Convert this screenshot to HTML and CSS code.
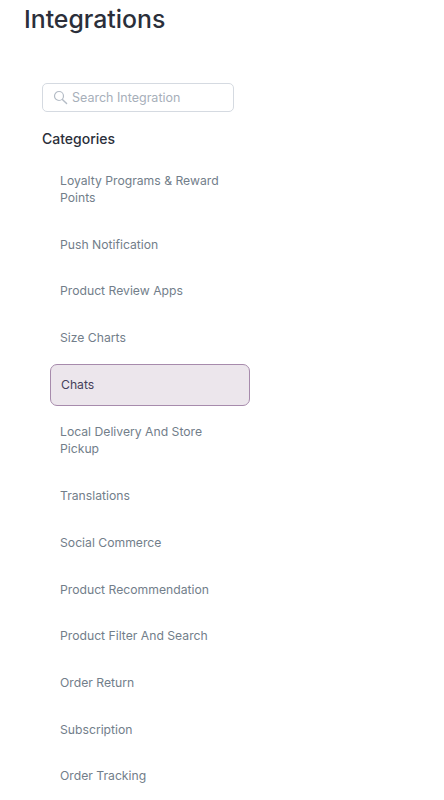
FILE: index.html
```html
<!DOCTYPE html>
<html lang="en">
<head>
<meta charset="UTF-8">
<meta name="viewport" content="width=device-width, initial-scale=1">
<title>Integrations</title>
<link rel="stylesheet" href="styles.css">
</head>
<body>
<h1 class="page-title">Integrations</h1>

<div class="sidebar">
    <label class="search-box">
        <svg class="search-icon" width="15" height="15" viewBox="0 0 15 15" fill="none">
            <circle cx="6" cy="6" r="4.5" stroke="#b4bcc6" stroke-width="1.2"/>
            <line x1="9.4" y1="9.4" x2="13.6" y2="13.6" stroke="#b4bcc6" stroke-width="1.4" stroke-linecap="round"/>
        </svg>
        <input class="search-input" placeholder="Search Integration">
    </label>

    <h2 class="categories-title">Categories</h2>

    <ul class="category-list">
        <li class="category">Loyalty Programs &amp; Reward Points</li>
        <li class="category">Push Notification</li>
        <li class="category">Product Review Apps</li>
        <li class="category">Size Charts</li>
        <li class="category active">Chats</li>
        <li class="category">Local Delivery And Store Pickup</li>
        <li class="category">Translations</li>
        <li class="category">Social Commerce</li>
        <li class="category">Product Recommendation</li>
        <li class="category">Product Filter And Search</li>
        <li class="category">Order Return</li>
        <li class="category">Subscription</li>
        <li class="category">Order Tracking</li>
    </ul>
</div>
</body>
</html>
```

FILE: styles.css
```css
* {
    box-sizing: border-box;
}

html, body {
    height: 100%;
}

body {
    margin: 0;
    overflow: hidden;
    background: #fff;
    color: #2b2f3a;
    font-family: Inter, 'Noto Sans', sans-serif;
}

.page-title {
    margin: 0;
    padding: 4px 0 0 24px;
    font-size: 24.8px;
    line-height: 30px;
    font-weight: 500;
    letter-spacing: 0;
}

.sidebar {
    width: 250px;
    padding: 49px 0 0 42px;
}

.search-box {
    display: flex;
    align-items: center;
    gap: 4px;
    width: 192px;
    height: 29px;
    padding: 0 10px;
    border: 1px solid #d5dae1;
    border-radius: 5px;
}

.search-icon {
    flex: none;
}

.search-input {
    flex: 1;
    min-width: 0;
    padding: 0;
    border: 0;
    outline: none;
    background: transparent;
    font-family: inherit;
    font-size: 12.5px;
}

.search-input::placeholder {
    color: #a7afba;
    opacity: 1;
}

.categories-title {
    margin: 17px 0 0;
    font-size: 14px;
    line-height: 20px;
    font-weight: 500;
}

.category-list {
    display: flex;
    flex-direction: column;
    gap: 5.7px;
    margin: 11px 0 0 8px;
    padding: 0;
    list-style: none;
}

.category {
    padding: 11px 25px 11px 10px;
    border: 1px solid transparent;
    border-left-width: 0;
    font-size: 12.2px;
    line-height: 17px;
    color: #727e8a;
}

.category.active {
    padding-top: 11.5px;
    padding-bottom: 11.5px;
    border: 1px solid #a78bac;
    border-radius: 7px;
    background: #ece6ec;
    color: #45405a;
}
```
